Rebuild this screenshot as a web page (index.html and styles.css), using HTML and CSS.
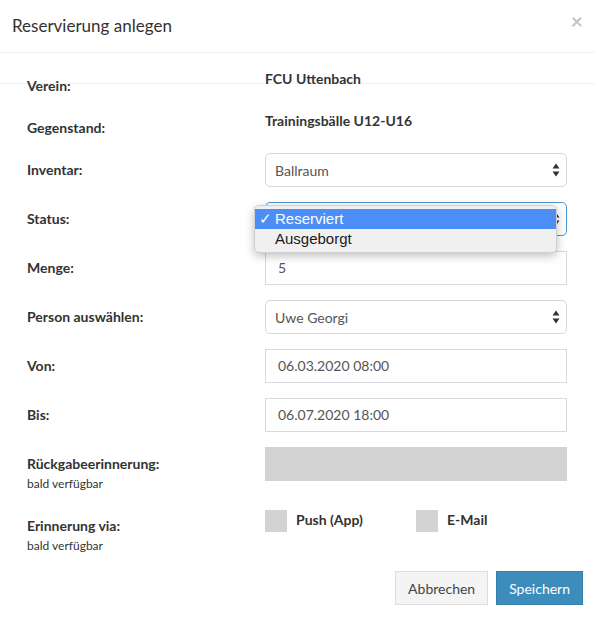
FILE: index.html
```html
<!DOCTYPE html>
<html lang="de">

<head>
  <meta charset="UTF-8" />
  <meta name="viewport" content="width=device-width, initial-scale=1.0" />
  <title>Reservierung anlegen</title>

  <link rel="stylesheet" href="styles.css">
</head>

<body>
  <div class="modal">
    <div class="modal-header">
      <h4 class="modal-title">Reservierung anlegen</h4>
      <span class="close">&times;</span>
    </div>

    <div class="modal-body">
      <div class="row">
        <label>Verein:</label>
        <p class="static">FCU Uttenbach</p>
      </div>

      <div class="row">
        <label>Gegenstand:</label>
        <p class="static">Trainingsbälle U12-U16</p>
      </div>

      <div class="row">
        <label>Inventar:</label>
        <div class="select">
          <span>Ballraum</span>
          <svg class="arrows" width="8" height="14" viewBox="0 0 8 14"><path d="M4 0.5 L7.5 5.5 L0.5 5.5 Z M4 13.5 L7.5 8.5 L0.5 8.5 Z" fill="#333" /></svg>
        </div>
      </div>

      <div class="row">
        <label>Status:</label>
        <div class="select focused">
          <span class="hidden">Reserviert</span>
          <svg class="arrows" width="8" height="14" viewBox="0 0 8 14"><path d="M4 0.5 L7.5 5.5 L0.5 5.5 Z M4 13.5 L7.5 8.5 L0.5 8.5 Z" fill="#333" /></svg>
          <ul class="popup">
            <li class="checked"><span class="tick">&#10003;</span>Reserviert</li>
            <li>Ausgeborgt</li>
          </ul>
        </div>
      </div>

      <div class="row">
        <label>Menge:</label>
        <div class="input">5</div>
      </div>

      <div class="row">
        <label>Person auswählen:</label>
        <div class="select">
          <span>Uwe Georgi</span>
          <svg class="arrows" width="8" height="14" viewBox="0 0 8 14"><path d="M4 0.5 L7.5 5.5 L0.5 5.5 Z M4 13.5 L7.5 8.5 L0.5 8.5 Z" fill="#333" /></svg>
        </div>
      </div>

      <div class="row">
        <label>Von:</label>
        <div class="input">06.03.2020 08:00</div>
      </div>

      <div class="row">
        <label>Bis:</label>
        <div class="input">06.07.2020 18:00</div>
      </div>

      <div class="row">
        <label>Rückgabeerinnerung:<small>bald verfügbar</small></label>
        <div class="input disabled"></div>
      </div>

      <div class="row">
        <label>Erinnerung via:<small>bald verfügbar</small></label>
        <div class="checks">
          <span class="check"><i class="box"></i>Push (App)</span>
          <span class="check"><i class="box"></i>E-Mail</span>
        </div>
      </div>
    </div>

    <div class="modal-footer">
      <button class="btn btn-default">Abbrechen</button>
      <button class="btn btn-primary">Speichern</button>
    </div>
  </div>
</body>

</html>
```

FILE: styles.css
```css
* {
  box-sizing: border-box;
}

body {
  margin: 0;
  background-color: #fff;
  font-family: Lato, "Open Sans", sans-serif;
  font-size: 14px;
  color: #333;
}

.modal-header {
  position: relative;
  height: 53px;
  padding: 14px 12px 0;
  border-bottom: 1px solid #f0f0f0;
}

.modal-title {
  margin: 0;
  font-size: 17px;
  font-weight: 400;
  line-height: 24px;
  color: #333;
}

.close {
  position: absolute;
  top: 8px;
  right: 12px;
  font-size: 21px;
  font-weight: 700;
  color: #c4c4c4;
}

.modal-body {
  position: relative;
  padding: 16px 28px 0 27px;
}

/* faint rule that runs behind the first row */
.modal-body::before {
  content: "";
  position: absolute;
  z-index: -1;
  left: 0;
  right: 0;
  top: 30px;
  border-top: 1px solid #f2f2f2;
}

.row {
  display: grid;
  grid-template-columns: 238px 302px;
  align-items: start;
  margin-bottom: 15px;
}

.row:last-child {
  margin-bottom: 0;
}

label {
  display: block;
  padding-top: 7px;
  font-weight: 700;
  line-height: 20px;
}

label small {
  display: block;
  font-size: 12px;
  font-weight: 400;
  line-height: 20px;
  color: #333;
}

.static {
  margin: 0;
  font-weight: 700;
  line-height: 20px;
}

.select {
  position: relative;
  display: flex;
  align-items: center;
  justify-content: space-between;
  height: 34px;
  padding: 0 6px 0 9px;
  border: 1px solid #d6d6da;
  border-radius: 5px;
  color: #555;
}

.select.focused {
  border-color: #4a92cc;
}

.hidden {
  visibility: hidden;
}

.input {
  height: 34px;
  padding: 0 12px;
  border: 1px solid #d9d9de;
  line-height: 32px;
  color: #555;
}

.input.disabled {
  border-color: #d3d3d3;
  background-color: #d3d3d3;
}

.popup {
  position: absolute;
  left: -12px;
  top: 2px;
  width: 303px;
  margin: 0;
  padding: 3px 0;
  list-style: none;
  background-color: #f0f0f0;
  border: 1px solid #d0d0d0;
  border-radius: 5px;
  box-shadow: 0 3px 10px rgba(0, 0, 0, 0.25);
  font-family: "Liberation Sans", Arial, sans-serif;
  font-size: 15px;
  color: #1a1a1a;
}

.popup li {
  height: 20px;
  padding-left: 20px;
  line-height: 20px;
}

.popup li.checked {
  position: relative;
  background-color: #4d8ef6;
  color: #fff;
}

.tick {
  position: absolute;
  left: 4px;
}

.checks {
  display: flex;
  padding-top: 1px;
}

.check {
  display: flex;
  align-items: flex-start;
  width: 151px;
  font-weight: 700;
  line-height: 20px;
}

.box {
  width: 22px;
  height: 22px;
  margin-right: 9px;
  background-color: #d3d3d3;
}

.modal-footer {
  display: flex;
  justify-content: flex-end;
  gap: 8px;
  padding: 15px 12px 15px;
}

.btn {
  height: 34px;
  padding: 0 12px;
  font-family: inherit;
  font-size: 14px;
  border: 1px solid transparent;
  border-radius: 0;
}

.btn-default {
  background-color: #f4f4f4;
  border-color: #ddd;
  color: #444;
}

.btn-primary {
  background-color: #3c8dbc;
  border-color: #367fa9;
  color: #fff;
}
```
